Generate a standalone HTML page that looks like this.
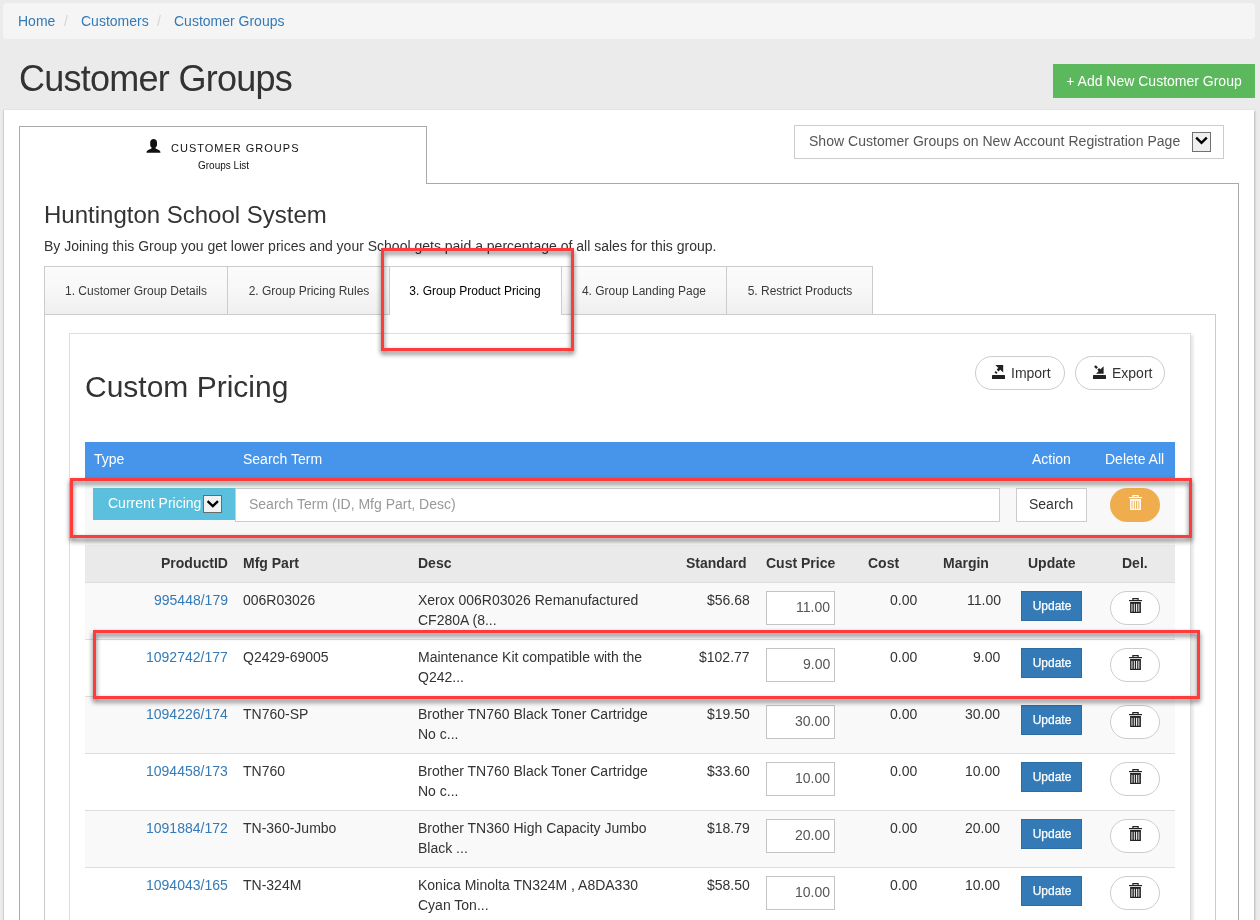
<!DOCTYPE html>
<html><head><meta charset="utf-8"><title>Customer Groups</title>
<style>
html,body{margin:0;padding:0;}
body{width:1260px;height:920px;overflow:hidden;position:relative;background:#ebebeb;font-family:"Liberation Sans",sans-serif;}
.t{position:absolute;white-space:nowrap;will-change:transform;}
.b{position:absolute;box-sizing:border-box;}
svg{position:absolute;}
</style></head><body>
<div class="b" style="left:3px;top:3px;width:1252px;height:36px;background:#f5f5f5;border-radius:4px;"></div>
<div class="t" style="left:18px;top:14.15px;font-size:14px;line-height:14px;color:#337ab7;">Home</div>
<div class="t" style="left:64px;top:14.15px;font-size:14px;line-height:14px;color:#d5d5d5;">/</div>
<div class="t" style="left:80.5px;top:14.15px;font-size:14px;line-height:14px;color:#337ab7;">Customers</div>
<div class="t" style="left:157px;top:14.15px;font-size:14px;line-height:14px;color:#d5d5d5;">/</div>
<div class="t" style="left:173.5px;top:14.15px;font-size:14px;line-height:14px;color:#337ab7;">Customer Groups</div>
<div class="t" style="left:18.5px;top:60.53px;font-size:36px;line-height:36px;color:#333;letter-spacing:-0.74px;">Customer Groups</div>
<div class="b" style="left:1053px;top:64px;width:202px;height:34px;background:#5cb85c;"></div>
<div class="t" style="left:954px;width:400px;text-align:center;top:74.15px;font-size:14px;line-height:14px;color:#fff;">+ Add New Customer Group</div>
<div class="b" style="left:4px;top:110px;width:1250px;height:890px;background:#fff;box-shadow:1px 1px 2px rgba(0,0,0,0.22),-1px 0 1px rgba(0,0,0,0.1);"></div>
<div class="b" style="left:19px;top:183px;width:1220px;height:817px;border:1px solid #aaa;border-top:1px solid #aaa;"></div>
<div class="b" style="left:19px;top:126px;width:408px;height:58px;background:#fff;border:1px solid #aaa;border-bottom:none;"></div>
<svg style="left:146px;top:139px" width="15" height="14" viewBox="0 0 15 14"><path d="M4.2 3.6C4.2 1.2 5.6 0 7.6 0S11 1.2 11 3.6V5.8C11 7.2 10.2 7.9 9.6 8.3V9.6L12.8 11.1C13.8 11.6 14.4 12.6 14.5 13.8H0.5C0.6 12.6 1.2 11.6 2.2 11.1L5.5 9.6V8.3C4.9 7.9 4.2 7.2 4.2 5.8Z" fill="#111"/></svg>
<div class="t" style="left:170.5px;top:142.69px;font-size:11px;line-height:11px;color:#111;letter-spacing:1px;">CUSTOMER GROUPS</div>
<div class="t" style="left:197.5px;top:160.53px;font-size:10px;line-height:10px;color:#111;">Groups List</div>
<div class="b" style="left:794px;top:125px;width:430px;height:34px;background:#fff;border:1px solid #ccc;"></div>
<div class="t" style="left:808.5px;top:134.15px;font-size:14px;line-height:14px;color:#555;letter-spacing:0.03px;">Show Customer Groups on New Account Registration Page</div>
<div class="b" style="left:1192px;top:132px;width:19px;height:20px;background:#efefef;border:1px solid #707070;"></div>
<svg style="left:1192px;top:132px" width="19" height="20" viewBox="0 0 19 20"><path d="M4.2 5.6L9.5 10.9L14.8 5.6" stroke="#000" stroke-width="2.4" fill="none"/></svg>
<div class="t" style="left:44px;top:202.68px;font-size:24px;line-height:24px;color:#333;">Huntington School System</div>
<div class="t" style="left:43.5px;top:239.15px;font-size:14px;line-height:14px;color:#333;">By Joining this Group you get lower prices and your School gets paid a percentage of all sales for this group.</div>
<div class="b" style="left:44px;top:314px;width:1172px;height:686px;border:1px solid #ccc;"></div>
<div class="b" style="left:44px;top:266px;width:184px;height:49px;background:linear-gradient(#fbfbfb 0%,#f8f8f8 45%,#efefef 100%);border:1px solid #ccc;"></div>
<div class="t" style="left:-64.0px;width:400px;text-align:center;top:284.84px;font-size:12px;line-height:12px;color:#3a3a3a;">1. Customer Group Details</div>
<div class="b" style="left:227px;top:266px;width:163px;height:49px;background:linear-gradient(#fbfbfb 0%,#f8f8f8 45%,#efefef 100%);border:1px solid #ccc;"></div>
<div class="t" style="left:108.5px;width:400px;text-align:center;top:284.84px;font-size:12px;line-height:12px;color:#3a3a3a;">2. Group Pricing Rules</div>
<div class="b" style="left:389px;top:266px;width:173px;height:49px;background:#fff;border:1px solid #ccc;border-bottom:none;"></div>
<div class="t" style="left:275.0px;width:400px;text-align:center;top:284.84px;font-size:12px;line-height:12px;color:#000;">3. Group Product Pricing</div>
<div class="b" style="left:561px;top:266px;width:166px;height:49px;background:linear-gradient(#fbfbfb 0%,#f8f8f8 45%,#efefef 100%);border:1px solid #ccc;"></div>
<div class="t" style="left:444.0px;width:400px;text-align:center;top:284.84px;font-size:12px;line-height:12px;color:#3a3a3a;">4. Group Landing Page</div>
<div class="b" style="left:726px;top:266px;width:147px;height:49px;background:linear-gradient(#fbfbfb 0%,#f8f8f8 45%,#efefef 100%);border:1px solid #ccc;"></div>
<div class="t" style="left:599.5px;width:400px;text-align:center;top:284.84px;font-size:12px;line-height:12px;color:#3a3a3a;">5. Restrict Products</div>
<div class="b" style="left:69px;top:333px;width:1122px;height:667px;background:#fff;border:1px solid #ddd;box-shadow:2px 2px 3px rgba(0,0,0,0.12);"></div>
<div class="t" style="left:85px;top:371.61px;font-size:30px;line-height:30px;color:#333;">Custom Pricing</div>
<div class="b" style="left:975px;top:356px;width:90px;height:34px;background:#fff;border:1px solid #ccc;border-radius:17px;"></div>
<div class="b" style="left:1075px;top:356px;width:90px;height:34px;background:#fff;border:1px solid #ccc;border-radius:17px;"></div>
<svg style="left:992px;top:365px" width="13" height="14" viewBox="0 0 13 14"><path d="M0 11C0 10.4 0.4 10 1 10H12C12.6 10 13 10.4 13 11V14H0Z" fill="#222"/><path d="M3.3 0H11.2V7.6Z" fill="#222"/><path d="M8.2 2.9L5.6 5.5" stroke="#222" stroke-width="2.6"/><path d="M3.1 6.6L4.9 8.4" stroke="#222" stroke-width="1.8"/></svg>
<svg style="left:1093px;top:365px" width="13" height="14" viewBox="0 0 13 14"><path d="M0 11C0 10.4 0.4 10 1 10H12C12.6 10 13 10.4 13 11V14H0Z" fill="#222"/><path d="M3 8.7H10.6V1.2Z" fill="#222"/><path d="M8 6.6L5.2 3.8" stroke="#222" stroke-width="2.6"/><path d="M4.1 3.1L1.9 1.0" stroke="#222" stroke-width="2.4"/></svg>
<div class="t" style="left:1011px;top:366.15px;font-size:14px;line-height:14px;color:#333;">Import</div>
<div class="t" style="left:1112px;top:366.15px;font-size:14px;line-height:14px;color:#333;">Export</div>
<div class="b" style="left:85px;top:442px;width:1090px;height:36px;background:#4795ea;"></div>
<div class="t" style="left:93.5px;top:452.15px;font-size:14px;line-height:14px;color:#fff;">Type</div>
<div class="t" style="left:243px;top:452.15px;font-size:14px;line-height:14px;color:#fff;">Search Term</div>
<div class="t" style="left:1031.5px;top:452.15px;font-size:14px;line-height:14px;color:#fff;">Action</div>
<div class="t" style="left:1104.5px;top:452.15px;font-size:14px;line-height:14px;color:#fff;">Delete All</div>
<div class="b" style="left:85px;top:478px;width:1090px;height:67px;background:#f8f8f8;"></div>
<div class="b" style="left:93px;top:488px;width:142px;height:32px;background:#5bc0de;"></div>
<div class="t" style="left:107.5px;top:496.15px;font-size:14px;line-height:14px;color:#fff;">Current Pricing</div>
<div class="b" style="left:203px;top:495px;width:19px;height:18px;background:#f2f2f2;border:1px solid #6a6a6a;"></div>
<svg style="left:203px;top:495px" width="19" height="18" viewBox="0 0 19 18"><path d="M4.6 6.2L9.8 11.2L15 6.2" stroke="#000" stroke-width="2.3" fill="none"/></svg>
<div class="b" style="left:235px;top:488px;width:765px;height:34px;background:#fff;border:1px solid #ccc;"></div>
<div class="t" style="left:248.5px;top:497.15px;font-size:14px;line-height:14px;color:#999;">Search Term (ID, Mfg Part, Desc)</div>
<div class="b" style="left:1016px;top:488px;width:71px;height:34px;background:#fff;border:1px solid #ccc;"></div>
<div class="t" style="left:1029px;top:497.15px;font-size:14px;line-height:14px;color:#333;">Search</div>
<div class="b" style="left:1110px;top:488px;width:50px;height:34px;background:#f0ad4e;border-radius:17px;"></div>
<svg style="left:1129px;top:495px" width="13" height="15" viewBox="0 0 13 15"><path d="M3.9 2.4V0.6H9.1V2.4" stroke="#fff" stroke-width="1.2" fill="none"/><rect x="0" y="2" width="13" height="1.2" fill="#fff"/><rect x="1.1" y="4" width="10.8" height="11" fill="#fff"/><rect x="2.4" y="5.8" width="1.1" height="8" fill="#f0ad4e" opacity="0.85"/><rect x="4.8" y="5.8" width="1.1" height="8" fill="#f0ad4e" opacity="0.85"/><rect x="7.1" y="5.8" width="1.1" height="8" fill="#f0ad4e"/><rect x="9.3" y="5.8" width="1.1" height="8" fill="#f0ad4e" opacity="0.85"/></svg>
<div class="b" style="left:85px;top:545px;width:1090px;height:38px;background:#eaeaea;"></div>
<div class="t" style="right:1032px;top:556.15px;font-size:14px;line-height:14px;color:#333;text-align:right;font-weight:700;">ProductID</div>
<div class="t" style="left:243px;top:556.15px;font-size:14px;line-height:14px;color:#333;font-weight:700;">Mfg Part</div>
<div class="t" style="left:417.5px;top:556.15px;font-size:14px;line-height:14px;color:#333;font-weight:700;">Desc</div>
<div class="t" style="right:513px;top:556.15px;font-size:14px;line-height:14px;color:#333;text-align:right;font-weight:700;">Standard</div>
<div class="t" style="left:766px;top:556.15px;font-size:14px;line-height:14px;color:#333;font-weight:700;">Cust Price</div>
<div class="t" style="left:868px;top:556.15px;font-size:14px;line-height:14px;color:#333;font-weight:700;">Cost</div>
<div class="t" style="left:943px;top:556.15px;font-size:14px;line-height:14px;color:#333;font-weight:700;">Margin</div>
<div class="t" style="left:1027.5px;top:556.15px;font-size:14px;line-height:14px;color:#333;font-weight:700;">Update</div>
<div class="t" style="left:1121.5px;top:556.15px;font-size:14px;line-height:14px;color:#333;font-weight:700;">Del.</div>
<div class="b" style="left:85px;top:582px;width:1090px;height:57px;background:#f9f9f9;border-top:1px solid #ddd;"></div>
<div class="t" style="right:1032px;top:593.15px;font-size:14px;line-height:14px;color:#337ab7;text-align:right;">995448/179</div>
<div class="t" style="left:243px;top:593.15px;font-size:14px;line-height:14px;color:#333;">006R03026</div>
<div class="t" style="left:417.5px;top:593.15px;font-size:14px;line-height:14px;color:#333;">Xerox 006R03026 Remanufactured</div>
<div class="t" style="left:417.5px;top:613.15px;font-size:14px;line-height:14px;color:#333;">CF280A (8...</div>
<div class="t" style="right:510px;top:593.15px;font-size:14px;line-height:14px;color:#333;text-align:right;">$56.68</div>
<div class="b" style="left:766px;top:591px;width:69px;height:34px;background:#fff;border:1px solid #c4c4c4;"></div>
<div class="t" style="right:430px;top:600.15px;font-size:14px;line-height:14px;color:#555;text-align:right;">11.00</div>
<div class="t" style="right:343px;top:593.15px;font-size:14px;line-height:14px;color:#333;text-align:right;">0.00</div>
<div class="t" style="right:259.5px;top:593.15px;font-size:14px;line-height:14px;color:#333;text-align:right;">11.00</div>
<div class="b" style="left:1021px;top:591px;width:61px;height:30px;background:#337ab7;border:1px solid #2e6da4;"></div>
<div class="t" style="left:851.5px;width:400px;text-align:center;top:600.34px;font-size:12px;line-height:12px;color:#fff;-webkit-text-stroke:0.25px #fff;">Update</div>
<div class="b" style="left:1110px;top:591px;width:50px;height:34px;background:#fff;border:1px solid #ccc;border-radius:17px;"></div>
<svg style="left:1129px;top:598px" width="13" height="15" viewBox="0 0 13 15"><path d="M3.9 2.4V0.6H9.1V2.4" stroke="#222" stroke-width="1.2" fill="none"/><rect x="0" y="2" width="13" height="1.2" fill="#222"/><rect x="1.1" y="4" width="10.8" height="11" fill="#222"/><rect x="2.4" y="5.8" width="1.1" height="8" fill="#fff" opacity="0.85"/><rect x="4.8" y="5.8" width="1.1" height="8" fill="#fff" opacity="0.85"/><rect x="7.1" y="5.8" width="1.1" height="8" fill="#fff"/><rect x="9.3" y="5.8" width="1.1" height="8" fill="#fff" opacity="0.85"/></svg>
<div class="b" style="left:85px;top:639px;width:1090px;height:57px;background:#fff;border-top:1px solid #ddd;"></div>
<div class="t" style="right:1032px;top:650.15px;font-size:14px;line-height:14px;color:#337ab7;text-align:right;">1092742/177</div>
<div class="t" style="left:243px;top:650.15px;font-size:14px;line-height:14px;color:#333;">Q2429-69005</div>
<div class="t" style="left:417.5px;top:650.15px;font-size:14px;line-height:14px;color:#333;">Maintenance Kit compatible with the</div>
<div class="t" style="left:417.5px;top:670.15px;font-size:14px;line-height:14px;color:#333;">Q242...</div>
<div class="t" style="right:510px;top:650.15px;font-size:14px;line-height:14px;color:#333;text-align:right;">$102.77</div>
<div class="b" style="left:766px;top:648px;width:69px;height:34px;background:#fff;border:1px solid #c4c4c4;"></div>
<div class="t" style="right:430px;top:657.15px;font-size:14px;line-height:14px;color:#555;text-align:right;">9.00</div>
<div class="t" style="right:343px;top:650.15px;font-size:14px;line-height:14px;color:#333;text-align:right;">0.00</div>
<div class="t" style="right:259.5px;top:650.15px;font-size:14px;line-height:14px;color:#333;text-align:right;">9.00</div>
<div class="b" style="left:1021px;top:648px;width:61px;height:30px;background:#337ab7;border:1px solid #2e6da4;"></div>
<div class="t" style="left:851.5px;width:400px;text-align:center;top:657.34px;font-size:12px;line-height:12px;color:#fff;-webkit-text-stroke:0.25px #fff;">Update</div>
<div class="b" style="left:1110px;top:648px;width:50px;height:34px;background:#fff;border:1px solid #ccc;border-radius:17px;"></div>
<svg style="left:1129px;top:655px" width="13" height="15" viewBox="0 0 13 15"><path d="M3.9 2.4V0.6H9.1V2.4" stroke="#222" stroke-width="1.2" fill="none"/><rect x="0" y="2" width="13" height="1.2" fill="#222"/><rect x="1.1" y="4" width="10.8" height="11" fill="#222"/><rect x="2.4" y="5.8" width="1.1" height="8" fill="#fff" opacity="0.85"/><rect x="4.8" y="5.8" width="1.1" height="8" fill="#fff" opacity="0.85"/><rect x="7.1" y="5.8" width="1.1" height="8" fill="#fff"/><rect x="9.3" y="5.8" width="1.1" height="8" fill="#fff" opacity="0.85"/></svg>
<div class="b" style="left:85px;top:696px;width:1090px;height:57px;background:#f9f9f9;border-top:1px solid #ddd;"></div>
<div class="t" style="right:1032px;top:707.15px;font-size:14px;line-height:14px;color:#337ab7;text-align:right;">1094226/174</div>
<div class="t" style="left:243px;top:707.15px;font-size:14px;line-height:14px;color:#333;">TN760-SP</div>
<div class="t" style="left:417.5px;top:707.15px;font-size:14px;line-height:14px;color:#333;">Brother TN760 Black Toner Cartridge</div>
<div class="t" style="left:417.5px;top:727.15px;font-size:14px;line-height:14px;color:#333;">No c...</div>
<div class="t" style="right:510px;top:707.15px;font-size:14px;line-height:14px;color:#333;text-align:right;">$19.50</div>
<div class="b" style="left:766px;top:705px;width:69px;height:34px;background:#fff;border:1px solid #c4c4c4;"></div>
<div class="t" style="right:430px;top:714.15px;font-size:14px;line-height:14px;color:#555;text-align:right;">30.00</div>
<div class="t" style="right:343px;top:707.15px;font-size:14px;line-height:14px;color:#333;text-align:right;">0.00</div>
<div class="t" style="right:259.5px;top:707.15px;font-size:14px;line-height:14px;color:#333;text-align:right;">30.00</div>
<div class="b" style="left:1021px;top:705px;width:61px;height:30px;background:#337ab7;border:1px solid #2e6da4;"></div>
<div class="t" style="left:851.5px;width:400px;text-align:center;top:714.34px;font-size:12px;line-height:12px;color:#fff;-webkit-text-stroke:0.25px #fff;">Update</div>
<div class="b" style="left:1110px;top:705px;width:50px;height:34px;background:#fff;border:1px solid #ccc;border-radius:17px;"></div>
<svg style="left:1129px;top:712px" width="13" height="15" viewBox="0 0 13 15"><path d="M3.9 2.4V0.6H9.1V2.4" stroke="#222" stroke-width="1.2" fill="none"/><rect x="0" y="2" width="13" height="1.2" fill="#222"/><rect x="1.1" y="4" width="10.8" height="11" fill="#222"/><rect x="2.4" y="5.8" width="1.1" height="8" fill="#fff" opacity="0.85"/><rect x="4.8" y="5.8" width="1.1" height="8" fill="#fff" opacity="0.85"/><rect x="7.1" y="5.8" width="1.1" height="8" fill="#fff"/><rect x="9.3" y="5.8" width="1.1" height="8" fill="#fff" opacity="0.85"/></svg>
<div class="b" style="left:85px;top:753px;width:1090px;height:57px;background:#fff;border-top:1px solid #ddd;"></div>
<div class="t" style="right:1032px;top:764.15px;font-size:14px;line-height:14px;color:#337ab7;text-align:right;">1094458/173</div>
<div class="t" style="left:243px;top:764.15px;font-size:14px;line-height:14px;color:#333;">TN760</div>
<div class="t" style="left:417.5px;top:764.15px;font-size:14px;line-height:14px;color:#333;">Brother TN760 Black Toner Cartridge</div>
<div class="t" style="left:417.5px;top:784.15px;font-size:14px;line-height:14px;color:#333;">No c...</div>
<div class="t" style="right:510px;top:764.15px;font-size:14px;line-height:14px;color:#333;text-align:right;">$33.60</div>
<div class="b" style="left:766px;top:762px;width:69px;height:34px;background:#fff;border:1px solid #c4c4c4;"></div>
<div class="t" style="right:430px;top:771.15px;font-size:14px;line-height:14px;color:#555;text-align:right;">10.00</div>
<div class="t" style="right:343px;top:764.15px;font-size:14px;line-height:14px;color:#333;text-align:right;">0.00</div>
<div class="t" style="right:259.5px;top:764.15px;font-size:14px;line-height:14px;color:#333;text-align:right;">10.00</div>
<div class="b" style="left:1021px;top:762px;width:61px;height:30px;background:#337ab7;border:1px solid #2e6da4;"></div>
<div class="t" style="left:851.5px;width:400px;text-align:center;top:771.34px;font-size:12px;line-height:12px;color:#fff;-webkit-text-stroke:0.25px #fff;">Update</div>
<div class="b" style="left:1110px;top:762px;width:50px;height:34px;background:#fff;border:1px solid #ccc;border-radius:17px;"></div>
<svg style="left:1129px;top:769px" width="13" height="15" viewBox="0 0 13 15"><path d="M3.9 2.4V0.6H9.1V2.4" stroke="#222" stroke-width="1.2" fill="none"/><rect x="0" y="2" width="13" height="1.2" fill="#222"/><rect x="1.1" y="4" width="10.8" height="11" fill="#222"/><rect x="2.4" y="5.8" width="1.1" height="8" fill="#fff" opacity="0.85"/><rect x="4.8" y="5.8" width="1.1" height="8" fill="#fff" opacity="0.85"/><rect x="7.1" y="5.8" width="1.1" height="8" fill="#fff"/><rect x="9.3" y="5.8" width="1.1" height="8" fill="#fff" opacity="0.85"/></svg>
<div class="b" style="left:85px;top:810px;width:1090px;height:57px;background:#f9f9f9;border-top:1px solid #ddd;"></div>
<div class="t" style="right:1032px;top:821.15px;font-size:14px;line-height:14px;color:#337ab7;text-align:right;">1091884/172</div>
<div class="t" style="left:243px;top:821.15px;font-size:14px;line-height:14px;color:#333;">TN-360-Jumbo</div>
<div class="t" style="left:417.5px;top:821.15px;font-size:14px;line-height:14px;color:#333;">Brother TN360 High Capacity Jumbo</div>
<div class="t" style="left:417.5px;top:841.15px;font-size:14px;line-height:14px;color:#333;">Black ...</div>
<div class="t" style="right:510px;top:821.15px;font-size:14px;line-height:14px;color:#333;text-align:right;">$18.79</div>
<div class="b" style="left:766px;top:819px;width:69px;height:34px;background:#fff;border:1px solid #c4c4c4;"></div>
<div class="t" style="right:430px;top:828.15px;font-size:14px;line-height:14px;color:#555;text-align:right;">20.00</div>
<div class="t" style="right:343px;top:821.15px;font-size:14px;line-height:14px;color:#333;text-align:right;">0.00</div>
<div class="t" style="right:259.5px;top:821.15px;font-size:14px;line-height:14px;color:#333;text-align:right;">20.00</div>
<div class="b" style="left:1021px;top:819px;width:61px;height:30px;background:#337ab7;border:1px solid #2e6da4;"></div>
<div class="t" style="left:851.5px;width:400px;text-align:center;top:828.34px;font-size:12px;line-height:12px;color:#fff;-webkit-text-stroke:0.25px #fff;">Update</div>
<div class="b" style="left:1110px;top:819px;width:50px;height:34px;background:#fff;border:1px solid #ccc;border-radius:17px;"></div>
<svg style="left:1129px;top:826px" width="13" height="15" viewBox="0 0 13 15"><path d="M3.9 2.4V0.6H9.1V2.4" stroke="#222" stroke-width="1.2" fill="none"/><rect x="0" y="2" width="13" height="1.2" fill="#222"/><rect x="1.1" y="4" width="10.8" height="11" fill="#222"/><rect x="2.4" y="5.8" width="1.1" height="8" fill="#fff" opacity="0.85"/><rect x="4.8" y="5.8" width="1.1" height="8" fill="#fff" opacity="0.85"/><rect x="7.1" y="5.8" width="1.1" height="8" fill="#fff"/><rect x="9.3" y="5.8" width="1.1" height="8" fill="#fff" opacity="0.85"/></svg>
<div class="b" style="left:85px;top:867px;width:1090px;height:57px;background:#fff;border-top:1px solid #ddd;"></div>
<div class="t" style="right:1032px;top:878.15px;font-size:14px;line-height:14px;color:#337ab7;text-align:right;">1094043/165</div>
<div class="t" style="left:243px;top:878.15px;font-size:14px;line-height:14px;color:#333;">TN-324M</div>
<div class="t" style="left:417.5px;top:878.15px;font-size:14px;line-height:14px;color:#333;">Konica Minolta TN324M , A8DA330</div>
<div class="t" style="left:417.5px;top:898.15px;font-size:14px;line-height:14px;color:#333;">Cyan Ton...</div>
<div class="t" style="right:510px;top:878.15px;font-size:14px;line-height:14px;color:#333;text-align:right;">$58.50</div>
<div class="b" style="left:766px;top:876px;width:69px;height:34px;background:#fff;border:1px solid #c4c4c4;"></div>
<div class="t" style="right:430px;top:885.15px;font-size:14px;line-height:14px;color:#555;text-align:right;">10.00</div>
<div class="t" style="right:343px;top:878.15px;font-size:14px;line-height:14px;color:#333;text-align:right;">0.00</div>
<div class="t" style="right:259.5px;top:878.15px;font-size:14px;line-height:14px;color:#333;text-align:right;">10.00</div>
<div class="b" style="left:1021px;top:876px;width:61px;height:30px;background:#337ab7;border:1px solid #2e6da4;"></div>
<div class="t" style="left:851.5px;width:400px;text-align:center;top:885.34px;font-size:12px;line-height:12px;color:#fff;-webkit-text-stroke:0.25px #fff;">Update</div>
<div class="b" style="left:1110px;top:876px;width:50px;height:34px;background:#fff;border:1px solid #ccc;border-radius:17px;"></div>
<svg style="left:1129px;top:883px" width="13" height="15" viewBox="0 0 13 15"><path d="M3.9 2.4V0.6H9.1V2.4" stroke="#222" stroke-width="1.2" fill="none"/><rect x="0" y="2" width="13" height="1.2" fill="#222"/><rect x="1.1" y="4" width="10.8" height="11" fill="#222"/><rect x="2.4" y="5.8" width="1.1" height="8" fill="#fff" opacity="0.85"/><rect x="4.8" y="5.8" width="1.1" height="8" fill="#fff" opacity="0.85"/><rect x="7.1" y="5.8" width="1.1" height="8" fill="#fff"/><rect x="9.3" y="5.8" width="1.1" height="8" fill="#fff" opacity="0.85"/></svg>
<div class="b" style="left:381px;top:248px;width:193px;height:103px;border:3px solid #ff3b3b;filter:drop-shadow(0 3px 2.5px rgba(0,0,0,0.6));"></div>
<div class="b" style="left:70px;top:478px;width:1122px;height:60px;border:3px solid #ff3b3b;filter:drop-shadow(0 3px 2.5px rgba(0,0,0,0.6));"></div>
<div class="b" style="left:93px;top:630px;width:1107px;height:69px;border:3px solid #ff3b3b;filter:drop-shadow(0 3px 2.5px rgba(0,0,0,0.6));"></div>
</body></html>
